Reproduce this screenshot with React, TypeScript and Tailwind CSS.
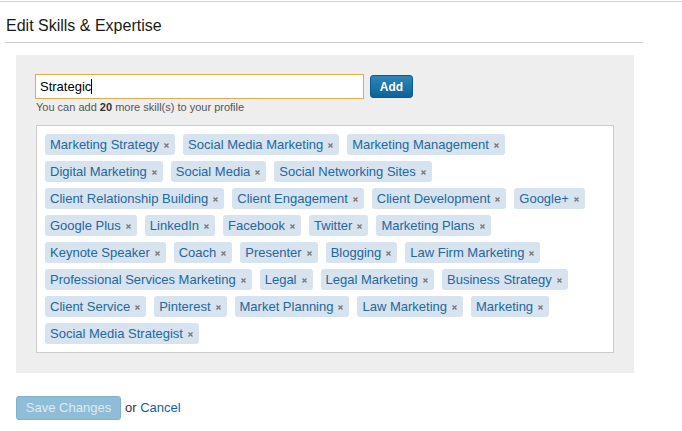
const skills = [
  'Marketing Strategy',
  'Social Media Marketing',
  'Marketing Management',
  'Digital Marketing',
  'Social Media',
  'Social Networking Sites',
  'Client Relationship Building',
  'Client Engagement',
  'Client Development',
  'Google+',
  'Google Plus',
  'LinkedIn',
  'Facebook',
  'Twitter',
  'Marketing Plans',
  'Keynote Speaker',
  'Coach',
  'Presenter',
  'Blogging',
  'Law Firm Marketing',
  'Professional Services Marketing',
  'Legal',
  'Legal Marketing',
  'Business Strategy',
  'Client Service',
  'Pinterest',
  'Market Planning',
  'Law Marketing',
  'Marketing',
  'Social Media Strategist',
]

function SkillTag({ name }: { name: string }) {
  return (
    <span className="flex h-[21px] items-center rounded-[3px] bg-[#d7e3ee] pl-[5px] pr-[6px] text-[13px] leading-none text-[#24679f]">
      {name}
      <svg width="5" height="5" viewBox="0 0 5 5" className="ml-[5px] mt-px">
        <path d="M0.5 0.5L4.5 4.5M4.5 0.5L0.5 4.5" stroke="#7a7a7a" strokeWidth="1.4" />
      </svg>
    </span>
  )
}

export default function App() {
  return (
    <div className="h-[431px] w-[682px] bg-white font-['Liberation_Sans',Arial,sans-serif] text-[#222]">
      <div className="h-px mt-px bg-[#cfcfcf]" />

      <div className="ml-[5px] w-[638px] border-b border-[#cccccc] pt-[15px] pb-[7px]">
        <h1 className="ml-px h-[18px] text-[16px] leading-[18px] text-[#1a1a1a]">Edit Skills &amp; Expertise</h1>
      </div>

      <div className="ml-4 mt-3 h-[318px] w-[618px] bg-[#eeeeee] pl-[19px] pt-[19px]">
        <div className="flex items-center">
          <div className="flex h-[25px] w-[329px] items-center border border-[#e4aa4e] bg-white pl-[4px] text-[13px] text-black">
            Strategic
            <span className="h-[15px] w-px bg-black" />
          </div>
          <button className="ml-[6px] h-[23px] w-[43px] rounded-[3px] border border-[#0c5a88] bg-gradient-to-b from-[#2d86ba] to-[#0e6396] text-[12px] font-bold text-white">
            Add
          </button>
        </div>
        <p className="mt-[2px] ml-px h-[13px] text-[11px] leading-[13px] text-[#555]">
          You can add <b className="text-[#333]">20</b> more skill(s) to your profile
        </p>

        <div className="mt-[11px] ml-px flex h-[228px] w-[578px] flex-wrap content-start gap-x-[8px] gap-y-[6px] border border-[#cccccc] bg-white px-[8px] pt-[8px]">
          {skills.map((s) => (
            <SkillTag key={s} name={s} />
          ))}
        </div>
      </div>

      <div className="ml-4 mt-[23px] flex items-center">
        <button className="h-[24px] w-[105px] rounded-[3px] border border-[#7fb1cd] bg-[#8fbdd7] text-[13px] text-[#dcebf3]">
          Save Changes
        </button>
        <span className="ml-[4px] text-[13px] text-[#333]">
          or <a className="text-[#0d64a6]">Cancel</a>
        </span>
      </div>
    </div>
  )
}
